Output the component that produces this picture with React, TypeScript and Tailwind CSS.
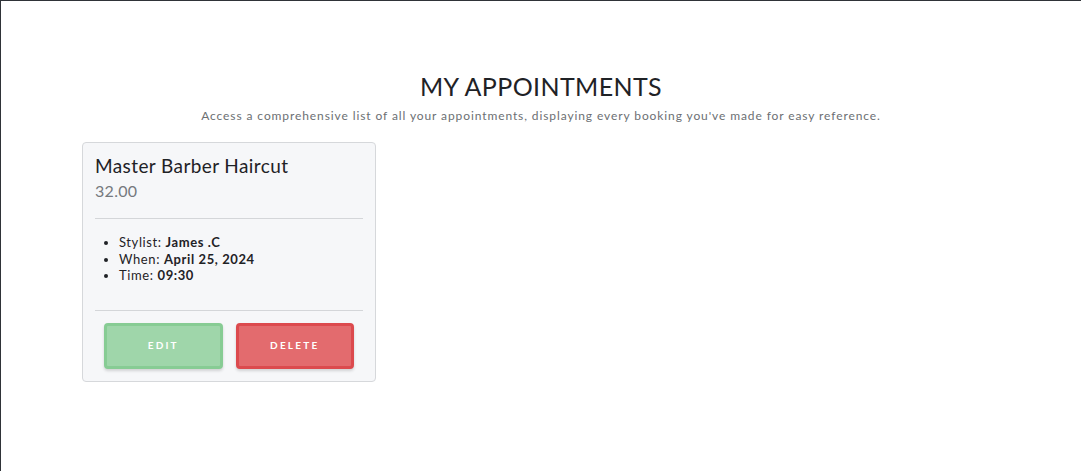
export default function App() {
  const font = { fontFamily: 'Lato, "Noto Sans", sans-serif' }
  return (
    <div
      className="min-h-[471px] w-full border-t border-l border-[#2f3338] bg-white text-[#212529]"
      style={font}
    >
      <div className="pt-[70px] text-center">
        <h1 className="text-[25px] leading-[30px] tracking-[0.4px] text-[#1f2226]">MY APPOINTMENTS</h1>
        <p className="mt-[7px] text-[12px] leading-[16px] tracking-[0.9px] text-[#6c6f73]">
          Access a comprehensive list of all your appointments, displaying every booking you've made for easy reference.
        </p>
      </div>

      <div className="mt-[18px] pl-[81px]">
        <div className="w-[294px] rounded-[4px] border border-[#d6d8db] bg-[#f6f7f9] px-[12px] pt-[10px] pb-[12px]">
          <h2 className="text-[19px] leading-[26px] tracking-[0.4px] text-[#1f2226]">Master Barber Haircut</h2>
          <div className="mt-[2px] text-[16px] leading-[20px] tracking-[0.3px] text-[#75797e]">32.00</div>

          <hr className="mt-[17px] border-t border-[#d4d6d9]" />

          <ul className="mt-[15px] list-disc pl-[24px] text-[13px] leading-[16.5px] tracking-[0.6px] text-[#1f2226]">
            <li>
              Stylist: <b>James .C</b>
            </li>
            <li>
              When: <b>April 25, 2024</b>
            </li>
            <li>
              Time: <b>09:30</b>
            </li>
          </ul>

          <hr className="mt-[26px] border-t border-[#d4d6d9]" />

          <div className="mt-[12px] flex gap-[13px] px-[9px]">
            <button className="h-[46px] w-[119px] rounded-[4px] border-[3px] border-[#87cc94] bg-[#9fd6aa] text-[10px] font-bold tracking-[2.2px] text-white shadow-[0_2px_3px_rgba(0,0,0,0.15)]">
              EDIT
            </button>
            <button className="h-[46px] w-[119px] rounded-[4px] border-[3px] border-[#dc4a4e] bg-[#e36b6e] text-[10px] font-bold tracking-[2.2px] text-white shadow-[0_2px_3px_rgba(0,0,0,0.15)]">
              DELETE
            </button>
          </div>
        </div>
      </div>
    </div>
  )
}
